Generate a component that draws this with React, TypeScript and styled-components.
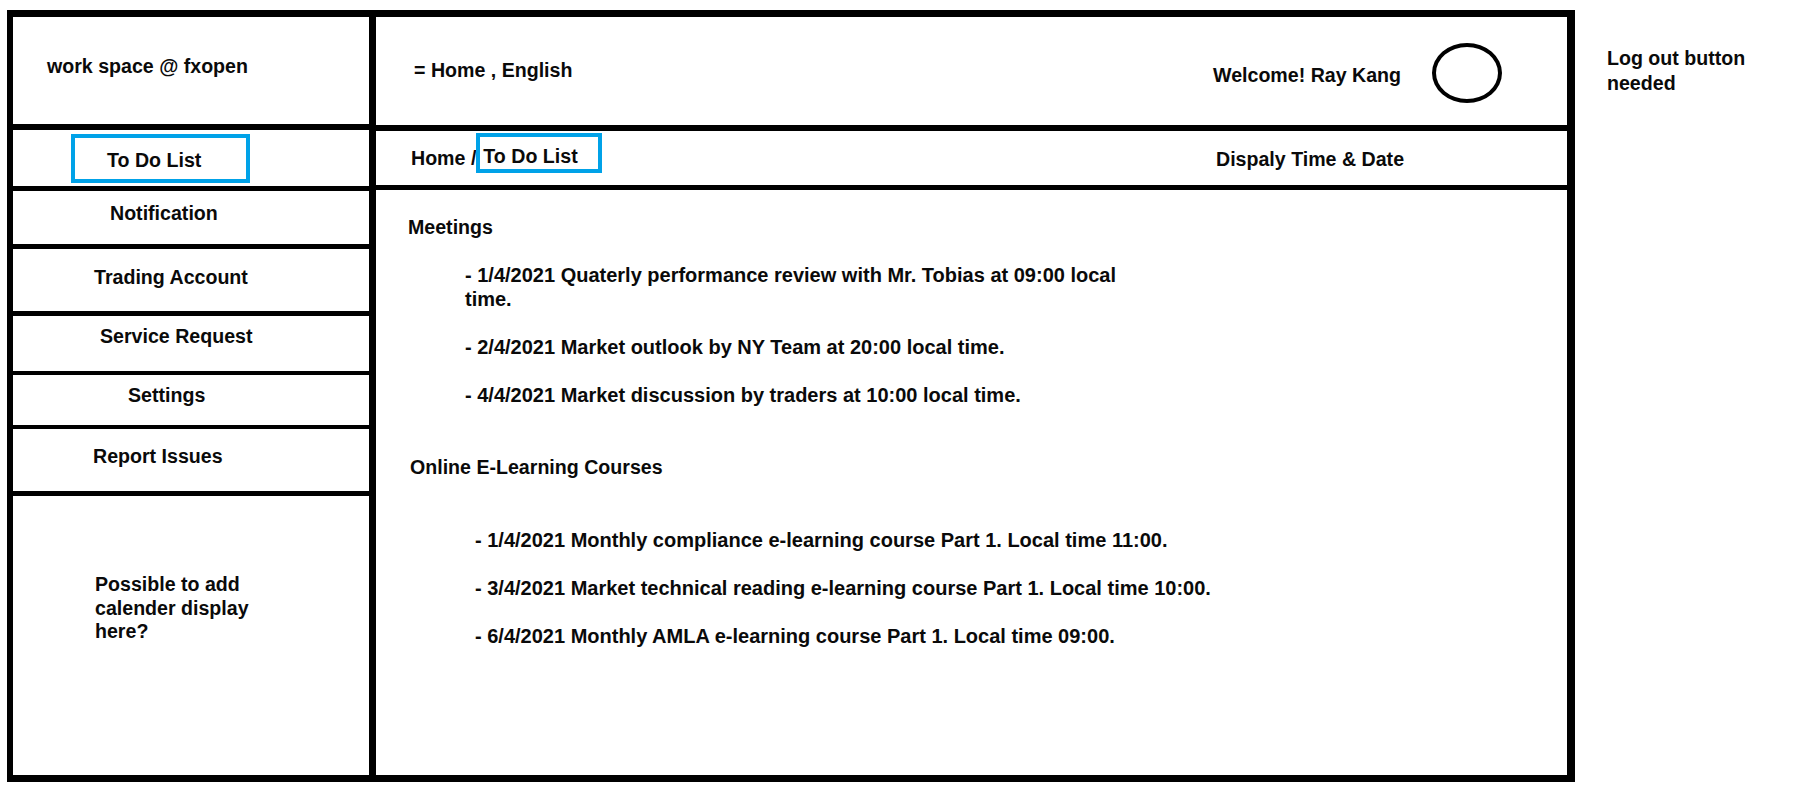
import React from "react";
import styled, { createGlobalStyle } from "styled-components";

const Global = createGlobalStyle`
  html, body {
    margin: 0;
    padding: 0;
    background: #ffffff;
  }
  body {
    font-family: "Liberation Sans", Arial, sans-serif;
    font-weight: 700;
    font-size: 19.6px;
    line-height: 24px;
    color: #0a0a0a;
  }
  * { box-sizing: border-box; }
`;

const Page = styled.div`
  display: flex;
  align-items: flex-start;
  padding: 10px 0 0 7px;
  width: 1806px;
  height: 797px;
`;

const Frame = styled.div`
  display: grid;
  grid-template-columns: 363px 1fr;
  width: 1568px;
  height: 772px;
  border-style: solid;
  border-color: #000;
  border-width: 7px 8px 7px 6px;
`;

const Sidebar = styled.nav`
  display: flex;
  flex-direction: column;
  border-right: 7px solid #000;
`;

const SideRow = styled.div<{ $h?: number; $line?: number; $pt: number; $indent: number }>`
  flex: ${(p) => (p.$h ? "none" : "1")};
  height: ${(p) => (p.$h ? `${p.$h}px` : "auto")};
  border-bottom: ${(p) => (p.$line ? `${p.$line}px solid #000` : "none")};
  padding-top: ${(p) => p.$pt}px;
  padding-left: ${(p) => p.$indent}px;
`;

const ActiveBox = styled.div<{ $w: number; $h: number; $pt: number; $pl: number }>`
  width: ${(p) => p.$w}px;
  height: ${(p) => p.$h}px;
  border: 4px solid #00a2e8;
  padding-top: ${(p) => p.$pt}px;
  padding-left: ${(p) => p.$pl}px;
  white-space: nowrap;
`;

const CalendarNote = styled.p`
  margin: 0;
  max-width: 170px;
  line-height: 23.5px;
`;

const Main = styled.main`
  display: flex;
  flex-direction: column;
  min-width: 0;
`;

const Header = styled.header`
  display: flex;
  height: 114px;
  border-bottom: 6px solid #000;
  padding-left: 38px;
`;

const Breadcrumb = styled.div`
  display: flex;
  height: 59px;
  border-bottom: 5px solid #000;
  padding-left: 35px;
`;

const Grow = styled.div<{ $pt: number }>`
  flex: 1;
  display: flex;
  align-items: flex-start;
  padding-top: ${(p) => p.$pt}px;
  white-space: nowrap;
`;

const RightCol = styled.div<{ $pt: number; $pl?: number }>`
  width: 354px;
  display: flex;
  align-items: flex-start;
  padding-top: ${(p) => p.$pt}px;
  padding-left: ${(p) => p.$pl ?? 0}px;
  white-space: nowrap;
`;

const Crumb = styled.span`
  padding-top: 13px;
`;

const Avatar = styled.div`
  width: 70px;
  height: 60px;
  margin-left: 31px;
  margin-top: -20px;
  border: 4px solid #000;
  border-radius: 50%;
`;

const Content = styled.section`
  flex: 1;
  padding-top: 25px;
`;

const Heading = styled.h2<{ $indent: number; $mt: number }>`
  margin: ${(p) => p.$mt}px 0 0 ${(p) => p.$indent}px;
  font-size: inherit;
  font-weight: inherit;
  line-height: 24px;
`;

const ItemList = styled.ul<{ $indent: number; $mt: number; $maxW?: number }>`
  list-style: none;
  margin: ${(p) => p.$mt}px 0 0 ${(p) => p.$indent}px;
  padding: 0;
  display: flex;
  flex-direction: column;
  gap: 24px;
  font-size: 20px;
  max-width: ${(p) => (p.$maxW ? `${p.$maxW}px` : "none")};
`;

const Item = styled.li``;

const Note = styled.p`
  margin: 36px 0 0 32px;
  width: 150px;
  line-height: 25px;
`;

const navItems = [
  { label: "Notification", h: 58, line: 5, pt: 10, indent: 97 },
  { label: "Trading Account", h: 67, line: 5, pt: 16, indent: 81 },
  { label: "Service Request", h: 59, line: 4, pt: 8, indent: 87 },
  { label: "Settings", h: 54, line: 4, pt: 8, indent: 115 },
  { label: "Report Issues", h: 67, line: 5, pt: 15, indent: 80 },
];

const meetings = [
  "- 1/4/2021 Quaterly performance review with Mr. Tobias at 09:00 local time.",
  "- 2/4/2021 Market outlook by NY Team at 20:00 local time.",
  "- 4/4/2021 Market discussion by traders at 10:00 local time.",
];

const courses = [
  "- 1/4/2021 Monthly compliance e-learning course Part 1. Local time 11:00.",
  "- 3/4/2021 Market technical reading e-learning course Part 1. Local time 10:00.",
  "- 6/4/2021 Monthly AMLA e-learning course Part 1. Local time 09:00.",
];

export default function App() {
  return (
    <>
      <Global />
      <Page>
        <Frame>
          <Sidebar>
            <SideRow $h={113} $line={6} $pt={37} $indent={34}>
              work space @ fxopen
            </SideRow>
            <SideRow $h={61} $line={5} $pt={4} $indent={58}>
              <ActiveBox $w={179} $h={49} $pt={10} $pl={32}>
                To Do List
              </ActiveBox>
            </SideRow>
            {navItems.map((n) => (
              <SideRow key={n.label} $h={n.h} $line={n.line} $pt={n.pt} $indent={n.indent}>
                {n.label}
              </SideRow>
            ))}
            <SideRow $pt={77} $indent={82}>
              <CalendarNote>Possible to add calender display here?</CalendarNote>
            </SideRow>
          </Sidebar>
          <Main>
            <Header>
              <Grow $pt={41}>= Home , English</Grow>
              <RightCol $pt={46}>
                Welcome! Ray Kang
                <Avatar />
              </RightCol>
            </Header>
            <Breadcrumb>
              <Grow $pt={2}>
                <Crumb>Home /</Crumb>
                <ActiveBox $w={126} $h={40} $pt={7} $pl={3}>
                  To Do List
                </ActiveBox>
              </Grow>
              <RightCol $pt={16} $pl={3}>Dispaly Time &amp; Date</RightCol>
            </Breadcrumb>
            <Content>
              <Heading $indent={32} $mt={0}>Meetings</Heading>
              <ItemList $indent={89} $mt={24} $maxW={680}>
                {meetings.map((m) => (
                  <Item key={m}>{m}</Item>
                ))}
              </ItemList>
              <Heading $indent={34} $mt={48}>Online E-Learning Courses</Heading>
              <ItemList $indent={99} $mt={49}>
                {courses.map((c) => (
                  <Item key={c}>{c}</Item>
                ))}
              </ItemList>
            </Content>
          </Main>
        </Frame>
        <Note>Log out button needed</Note>
      </Page>
    </>
  );
}
